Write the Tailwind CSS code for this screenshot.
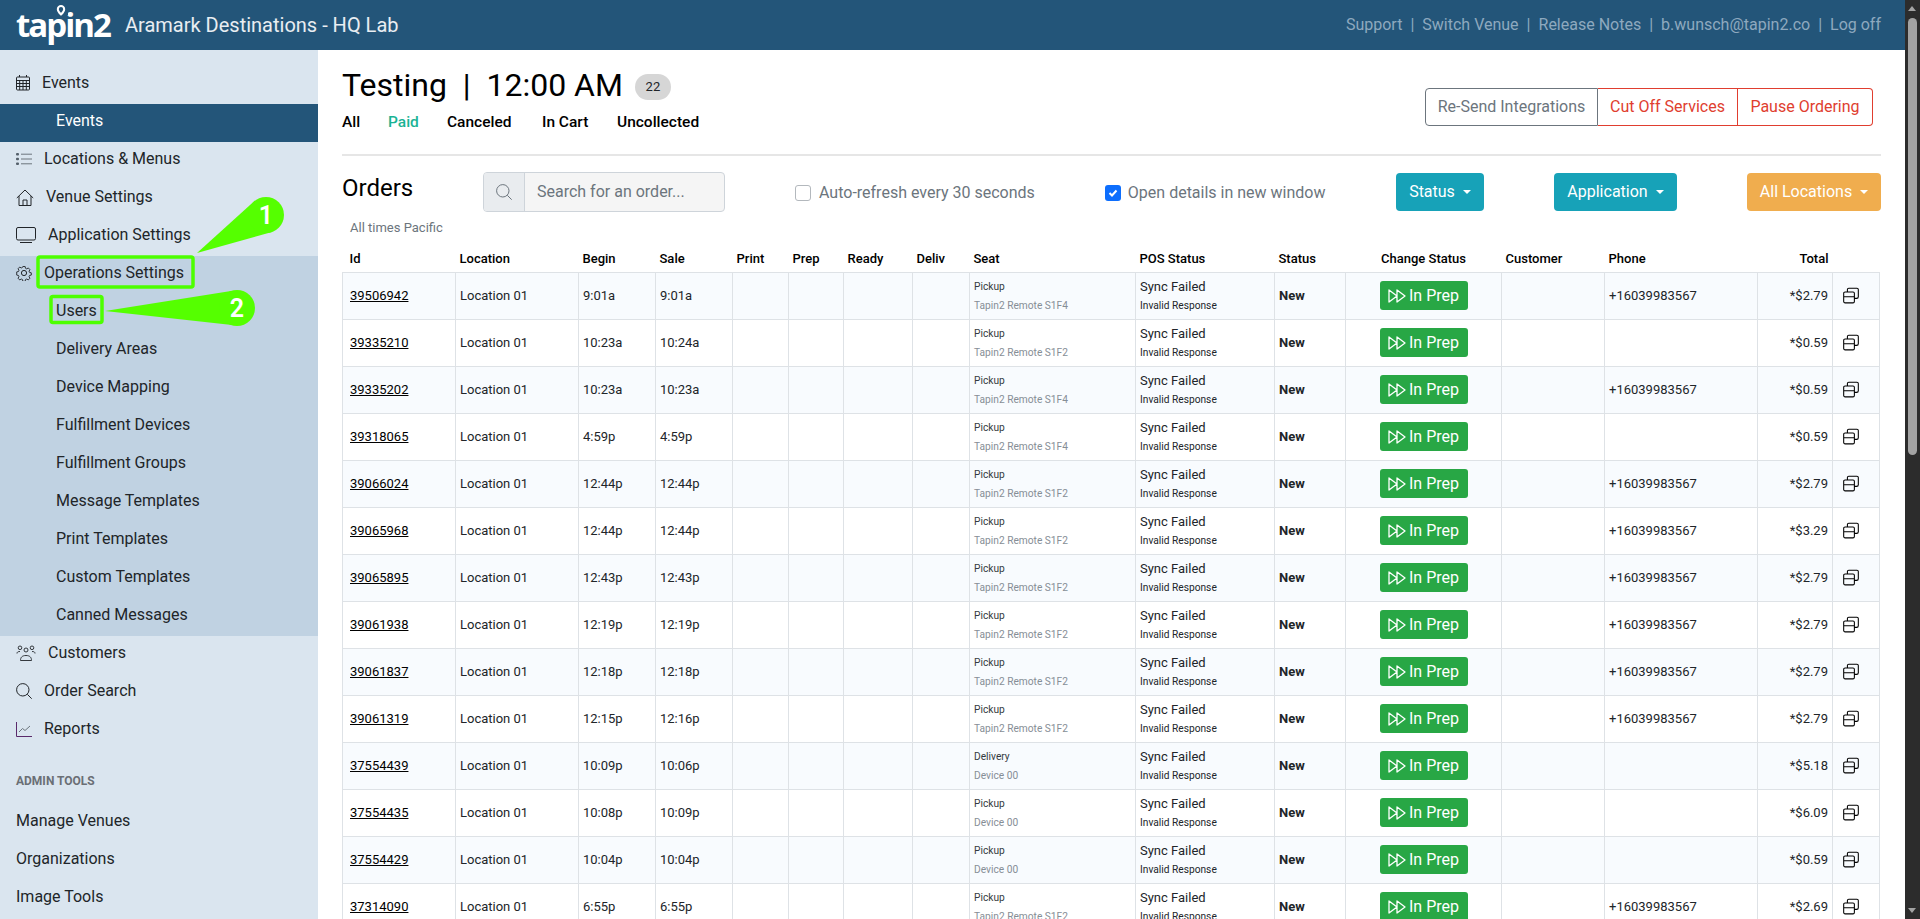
<!DOCTYPE html>
<html lang="en">
  <head>
    <meta charset="UTF-8" />
    <title>Orders - Testing</title>
    <script src="https://cdn.jsdelivr.net/npm/@tailwindcss/browser@4"></script>
  </head>

  <body class="bg-white font-['Roboto',sans-serif] text-[#212529] overflow-hidden">
    <!-- shared icons -->
    <svg class="hidden">
      <symbol id="i-forward" viewBox="0 0 18 18">
        <path fill="none" stroke="currentColor" stroke-width="1.300" stroke-linejoin="round" d="M1 3v12l8-6zM9 3v12l8-6z" />
      </symbol>
      <symbol id="i-copy" viewBox="0 0 16 16">
        <path fill="none" stroke="currentColor" stroke-width=".95" d="M1.500 6.500a1.200 1.200 0 0 1 1.200-1.200h7.100a1.200 1.200 0 0 1 1.200 1.200v7.300a1.200 1.200 0 0 1-1.200 1.200H2.700a1.200 1.200 0 0 1-1.200-1.200zM1.500 9.500h9.500M4.800 5.300V3.200A1.200 1.200 0 0 1 6 2h7.300a1.200 1.200 0 0 1 1.200 1.200v6.300a1.500 1.500 0 0 1-1.500 1.500h-2" />
      </symbol>
    </svg>

    <div class="flex h-[919px] w-[1920px]">
      <div class="w-[1905px] flex flex-col overflow-hidden">
        <!-- top bar -->
        <header class="h-[50px] shrink-0 bg-[#235579] flex items-center pl-4 pr-6">
          <div class="relative w-[94px] mr-[15px]">
            <span class="block font-['Open_Sans',sans-serif] font-bold text-[33px] leading-[50px] tracking-[-2px] text-white">tapin2</span>
            <svg class="absolute left-[38px] top-[4px]" width="14" height="17" viewBox="0 0 14 17">
              <rect width="14" height="11" fill="#235579" />
              <path fill="none" stroke="#fff" stroke-width="2" d="M7 2a3.200 3.200 0 0 1 3.200 3.200C10.200 7.500 7 10.500 7 10.500S3.800 7.500 3.800 5.200A3.200 3.200 0 0 1 7 2z" />
            </svg>
          </div>
          <span class="text-[20px] text-white/90">Aramark Destinations - HQ Lab</span>
          <nav class="ml-auto flex items-center text-[16px] text-[#8ea9bf]">
            <a>Support</a><span class="mx-[8px]">|</span>
            <a>Switch Venue</a><span class="mx-[8px]">|</span>
            <a>Release Notes</a><span class="mx-[8px]">|</span>
            <a>b.wunsch@tapin2.co</a><span class="mx-[8px]">|</span>
            <a>Log off</a>
          </nav>
        </header>

        <div class="flex flex-1 min-h-0">
          <!-- sidebar -->
          <aside class="w-[318px] shrink-0 bg-[#dae5ef] pt-4 text-[16px]">
            <a class="flex items-center h-[38px] pb-1 pl-4">
              <svg class="w-[14px] h-[16px] mr-3" viewBox="0 0 14 16" fill="none" stroke="currentColor"><rect x=".5" y="2" width="13" height="13" rx="1" /><path d="M3.500 0v2M10.500 0v2M.5 5.500h13M.5 8.500h13M.5 11.500h13M3.700 5.500V15M7 5.500V15M10.300 5.500V15" /></svg>
              Events
            </a>
            <a class="flex items-center h-[38px] pb-1 pl-14 bg-[#235579] text-white">Events</a>
            <a class="flex items-center h-[38px] pb-1 pl-4">
              <svg class="w-[16px] h-[14px] mr-3" viewBox="0 0 16 14"><g fill="#55606b"><rect y="1" width="3" height="2.400" rx="1" /><rect y="5.800" width="3" height="2.400" rx="1" /><rect y="10.600" width="3" height="2.400" rx="1" /></g><path stroke="#6c757d" d="M5 2.200h11M5 7h11M5 11.800h11" /></svg>
              Locations &amp; Menus
            </a>
            <a class="flex items-center h-[38px] pb-1 pl-4">
              <svg class="w-[18px] h-[17px] mr-3" viewBox="0 0 18 17" fill="none" stroke="currentColor"><path d="M.8 9 9 1l8.200 8M3 7v9.500h12V7M7 16.500v-5.500h4v5.500" /></svg>
              Venue Settings
            </a>
            <a class="flex items-center h-[38px] pb-1 pl-4">
              <svg class="w-[20px] h-[16px] mr-3" viewBox="0 0 20 16" fill="none" stroke="currentColor"><rect x=".5" y=".5" width="19" height="12.500" rx="1.500" /><path d="M4 15.500h12" /></svg>
              Application Settings
            </a>
            <div class="bg-[#c0d2e2]">
              <a class="flex items-center h-[38px] pb-1 pl-4">
                <svg class="w-[16px] h-[16px] mr-3" viewBox="0 0 16 16" fill="none" stroke="currentColor"><circle cx="8" cy="8" r="2.600" /><path stroke-linejoin="round" d="M6.700.8h2.600l.4 2 1.300.6 1.800-1 1.800 1.900-1 1.700.5 1.300 2 .5v2.500l-2 .5-.5 1.300 1 1.700-1.800 1.900-1.800-1-1.300.6-.4 2H6.700l-.4-2-1.300-.6-1.800 1-1.800-1.900 1-1.700-.5-1.300-2-.5V6.800l2-.5.5-1.300-1-1.700 1.800-1.900 1.800 1 1.300-.6z" transform="translate(.8 .8) scale(.9)" /></svg>
                Operations Settings
              </a>
              <a class="flex items-center h-[38px] pb-1 pl-14">Users</a>
              <a class="flex items-center h-[38px] pb-1 pl-14">Delivery Areas</a>
              <a class="flex items-center h-[38px] pb-1 pl-14">Device Mapping</a>
              <a class="flex items-center h-[38px] pb-1 pl-14">Fulfillment Devices</a>
              <a class="flex items-center h-[38px] pb-1 pl-14">Fulfillment Groups</a>
              <a class="flex items-center h-[38px] pb-1 pl-14">Message Templates</a>
              <a class="flex items-center h-[38px] pb-1 pl-14">Print Templates</a>
              <a class="flex items-center h-[38px] pb-1 pl-14">Custom Templates</a>
              <a class="flex items-center h-[38px] pb-1 pl-14">Canned Messages</a>
            </div>
            <a class="flex items-center h-[38px] pb-1 pl-4">
              <svg class="w-[20px] h-[16px] mr-3" viewBox="0 0 20 16" fill="none" stroke="currentColor" stroke-width=".9"><circle cx="4" cy="2.800" r="1.800" /><circle cx="10" cy="5" r="2" /><circle cx="16" cy="2.800" r="1.800" /><path d="M1 8.500c0-1.500 1-2 3-2M19 8.500c0-1.500-1-2-3-2M4.500 15.500c0-3 1.500-5 5.500-5s5.500 2 5.500 5z" /></svg>
              Customers
            </a>
            <a class="flex items-center h-[38px] pb-1 pl-4">
              <svg class="w-[16px] h-[16px] mr-3" viewBox="0 0 16 16" fill="none" stroke="currentColor"><circle cx="6.800" cy="6.800" r="6.200" /><path d="m11.300 11.300 4.400 4.400" /></svg>
              Order Search
            </a>
            <a class="flex items-center h-[38px] pb-1 pl-4">
              <svg class="w-[16px] h-[15px] mr-3" viewBox="0 0 16 15" fill="none"><path stroke="#5a2a6b" d="M.5 0v14.500H16" /><path stroke="#6c757d" d="m3 10 3.500-3.500 2.500 2 5-4.500" /></svg>
              Reports
            </a>
            <div class="h-[52px] pl-4 pt-[24px] text-[12px] leading-[14px] font-bold text-[#6a6f75]">ADMIN TOOLS</div>
            <a class="flex items-center h-[38px] pl-4">Manage Venues</a>
            <a class="flex items-center h-[38px] pl-4">Organizations</a>
            <a class="flex items-center h-[38px] pl-4">Image Tools</a>
          </aside>

          <!-- main -->
          <main class="flex-1 min-w-0 pl-6 pr-6 pt-4">
            <div class="flex items-start justify-between h-[90px] border-b-2 border-[#e6e6e6]">
              <div>
                <div class="flex items-center h-[38px]">
                  <h1 class="text-[32px] leading-[38px] text-black whitespace-pre">Testing  |  12:00 AM</h1>
                  <span class="ml-[12px] mt-[3px] w-[36px] h-[26px] rounded-full bg-[#d6d6d6] flex items-center justify-center text-[13px]">22</span>
                </div>
                <div class="flex mt-[7px] text-[15.500px] leading-[22px] font-medium text-black">
                  <a class="w-[46px]">All</a>
                  <a class="w-[59px] text-[#1ab394]">Paid</a>
                  <a class="w-[95px]">Canceled</a>
                  <a class="w-[75px]">In Cart</a>
                  <a>Uncollected</a>
                </div>
              </div>
              <div class="flex mt-[22px] mr-[8px] h-[38px] text-[16px]">
                <button class="w-[173px] border border-[#6c757d] rounded-l-[4px] text-[#6c757d]">Re-Send Integrations</button>
                <button class="w-[140px] border border-l-0 border-[#e03e2f] text-[#e03e2f]">Cut Off Services</button>
                <button class="w-[135px] border border-l-0 border-[#e03e2f] rounded-r-[4px] text-[#e03e2f]">Pause Ordering</button>
              </div>
            </div>

            <div class="flex items-start mt-[16px] h-[40px]">
              <h2 class="w-[141px] mt-[1px] text-[24px] leading-[30px] text-black">Orders</h2>
              <div class="flex w-[242px] h-[40px] border border-[#ced4da] rounded-[4px] overflow-hidden bg-[#f5f5f5]">
                <span class="w-[41px] bg-[#e9ecef] border-r border-[#ced4da] flex items-center justify-center text-[#6c757d]">
                  <svg class="w-[16px] h-[16px]" viewBox="0 0 16 16" fill="none" stroke="currentColor"><circle cx="6.800" cy="6.800" r="6.200" /><path d="m11.300 11.300 4.400 4.400" /></svg>
                </span>
                <span class="pl-3 flex items-center text-[16px] text-[#6c757d]">Search for an order...</span>
              </div>
              <label class="ml-[70px] mt-[9px] flex items-center text-[16px] text-[#6c757d]">
                <span class="w-[16px] h-[16px] border border-[#b3b8bd] rounded-[3px] bg-white mr-[8px]"></span>
                Auto-refresh every 30 seconds
              </label>
              <label class="ml-[70px] mt-[9px] flex items-center text-[16px] text-[#6c757d]">
                <span class="w-[16px] h-[16px] rounded-[3px] bg-[#0d6efd] mr-[7px] flex items-center justify-center">
                  <svg class="w-[10px] h-[10px]" viewBox="0 0 10 10" fill="none" stroke="#fff" stroke-width="2"><path d="m1.500 5 2.500 2.500 4.500-5" /></svg>
                </span>
                Open details in new window
              </label>
              <div class="ml-auto flex mt-[1px]">
                <button class="w-[88px] h-[38px] rounded-[4px] bg-[#17a2b8] text-white text-[16px] flex items-center justify-center">Status<span class="ml-[8px] w-0 h-0 border-x-[4px] border-t-[4px] border-x-transparent border-t-white"></span></button>
                <button class="ml-[70px] w-[123px] h-[38px] rounded-[4px] bg-[#17a2b8] text-white text-[16px] flex items-center justify-center">Application<span class="ml-[8px] w-0 h-0 border-x-[4px] border-t-[4px] border-x-transparent border-t-white"></span></button>
                <button class="ml-[70px] w-[134px] h-[38px] rounded-[4px] bg-[#f0ad4e] text-white text-[16px] flex items-center justify-center">All Locations<span class="ml-[8px] w-0 h-0 border-x-[4px] border-t-[4px] border-x-transparent border-t-white"></span></button>
              </div>
            </div>

            <div class="pl-2 mt-[8px] text-[13px] leading-[16px] text-[#6c757d]">All times Pacific</div>

            <table class="mt-[10px] w-[1537px] table-fixed border-collapse text-[13px] [&_th]:h-[26px] [&_th]:px-[4px] [&_th]:font-medium [&_th]:text-left [&_th]:text-black [&_td]:h-[47px] [&_td]:border [&_td]:border-[#dee2e6] [&_td]:px-[4px] [&_td]:leading-[16px]">
              <colgroup>
                <col class="w-[113px]" /><col class="w-[123px]" /><col class="w-[77px]" /><col class="w-[77px]" /><col class="w-[56px]" /><col class="w-[55px]" /><col class="w-[69px]" /><col class="w-[57px]" /><col class="w-[166px]" /><col class="w-[139px]" /><col class="w-[71px]" /><col class="w-[156px]" /><col class="w-[103px]" /><col class="w-[153px]" /><col class="w-[75px]" /><col class="w-[47px]" />
              </colgroup>
              <thead>
                <tr>
                  <th class="!pl-[7px]">Id</th><th>Location</th><th>Begin</th><th>Sale</th><th>Print</th><th>Prep</th><th>Ready</th><th>Deliv</th><th>Seat</th><th>POS Status</th><th>Status</th><th class="text-center!">Change Status</th><th>Customer</th><th>Phone</th><th class="text-right!">Total</th><th></th>
                </tr>
              </thead>
              <tbody>
                <tr class="odd:bg-[#f8fbfe]">
                  <td class="!pl-[7px]"><a class="underline text-black">39506942</a></td><td>Location 01</td><td>9:01a</td><td>9:01a</td><td></td><td></td><td></td><td></td>
                  <td class="text-[10.200px]"><div class="mt-[1px] text-[#343a40]">Pickup</div><div class="mt-[3px] text-[#868e96]">Tapin2 Remote S1F4</div></td>
                  <td><div class="mt-[1px]">Sync Failed</div><div class="mt-[3px] text-[10.200px]">Invalid Response</div></td>
                  <td class="font-bold">New</td>
                  <td><button class="mx-auto flex items-center justify-center w-[88px] h-[29px] rounded-[3px] bg-[#28a745] text-white text-[16px]"><svg class="w-[18px] h-[18px] mr-[3px]"><use href="#i-forward" /></svg>In Prep</button></td>
                  <td></td><td>+16039983567</td><td class="text-right">*$2.79</td><td><svg class="w-[18px] h-[18px] ml-[5px] -mt-[2px] text-black"><use href="#i-copy" /></svg></td>
                </tr>
                <tr class="odd:bg-[#f8fbfe]">
                  <td class="!pl-[7px]"><a class="underline text-black">39335210</a></td><td>Location 01</td><td>10:23a</td><td>10:24a</td><td></td><td></td><td></td><td></td>
                  <td class="text-[10.200px]"><div class="mt-[1px] text-[#343a40]">Pickup</div><div class="mt-[3px] text-[#868e96]">Tapin2 Remote S1F2</div></td>
                  <td><div class="mt-[1px]">Sync Failed</div><div class="mt-[3px] text-[10.200px]">Invalid Response</div></td>
                  <td class="font-bold">New</td>
                  <td><button class="mx-auto flex items-center justify-center w-[88px] h-[29px] rounded-[3px] bg-[#28a745] text-white text-[16px]"><svg class="w-[18px] h-[18px] mr-[3px]"><use href="#i-forward" /></svg>In Prep</button></td>
                  <td></td><td></td><td class="text-right">*$0.59</td><td><svg class="w-[18px] h-[18px] ml-[5px] -mt-[2px] text-black"><use href="#i-copy" /></svg></td>
                </tr>
                <tr class="odd:bg-[#f8fbfe]">
                  <td class="!pl-[7px]"><a class="underline text-black">39335202</a></td><td>Location 01</td><td>10:23a</td><td>10:23a</td><td></td><td></td><td></td><td></td>
                  <td class="text-[10.200px]"><div class="mt-[1px] text-[#343a40]">Pickup</div><div class="mt-[3px] text-[#868e96]">Tapin2 Remote S1F4</div></td>
                  <td><div class="mt-[1px]">Sync Failed</div><div class="mt-[3px] text-[10.200px]">Invalid Response</div></td>
                  <td class="font-bold">New</td>
                  <td><button class="mx-auto flex items-center justify-center w-[88px] h-[29px] rounded-[3px] bg-[#28a745] text-white text-[16px]"><svg class="w-[18px] h-[18px] mr-[3px]"><use href="#i-forward" /></svg>In Prep</button></td>
                  <td></td><td>+16039983567</td><td class="text-right">*$0.59</td><td><svg class="w-[18px] h-[18px] ml-[5px] -mt-[2px] text-black"><use href="#i-copy" /></svg></td>
                </tr>
                <tr class="odd:bg-[#f8fbfe]">
                  <td class="!pl-[7px]"><a class="underline text-black">39318065</a></td><td>Location 01</td><td>4:59p</td><td>4:59p</td><td></td><td></td><td></td><td></td>
                  <td class="text-[10.200px]"><div class="mt-[1px] text-[#343a40]">Pickup</div><div class="mt-[3px] text-[#868e96]">Tapin2 Remote S1F4</div></td>
                  <td><div class="mt-[1px]">Sync Failed</div><div class="mt-[3px] text-[10.200px]">Invalid Response</div></td>
                  <td class="font-bold">New</td>
                  <td><button class="mx-auto flex items-center justify-center w-[88px] h-[29px] rounded-[3px] bg-[#28a745] text-white text-[16px]"><svg class="w-[18px] h-[18px] mr-[3px]"><use href="#i-forward" /></svg>In Prep</button></td>
                  <td></td><td></td><td class="text-right">*$0.59</td><td><svg class="w-[18px] h-[18px] ml-[5px] -mt-[2px] text-black"><use href="#i-copy" /></svg></td>
                </tr>
                <tr class="odd:bg-[#f8fbfe]">
                  <td class="!pl-[7px]"><a class="underline text-black">39066024</a></td><td>Location 01</td><td>12:44p</td><td>12:44p</td><td></td><td></td><td></td><td></td>
                  <td class="text-[10.200px]"><div class="mt-[1px] text-[#343a40]">Pickup</div><div class="mt-[3px] text-[#868e96]">Tapin2 Remote S1F2</div></td>
                  <td><div class="mt-[1px]">Sync Failed</div><div class="mt-[3px] text-[10.200px]">Invalid Response</div></td>
                  <td class="font-bold">New</td>
                  <td><button class="mx-auto flex items-center justify-center w-[88px] h-[29px] rounded-[3px] bg-[#28a745] text-white text-[16px]"><svg class="w-[18px] h-[18px] mr-[3px]"><use href="#i-forward" /></svg>In Prep</button></td>
                  <td></td><td>+16039983567</td><td class="text-right">*$2.79</td><td><svg class="w-[18px] h-[18px] ml-[5px] -mt-[2px] text-black"><use href="#i-copy" /></svg></td>
                </tr>
                <tr class="odd:bg-[#f8fbfe]">
                  <td class="!pl-[7px]"><a class="underline text-black">39065968</a></td><td>Location 01</td><td>12:44p</td><td>12:44p</td><td></td><td></td><td></td><td></td>
                  <td class="text-[10.200px]"><div class="mt-[1px] text-[#343a40]">Pickup</div><div class="mt-[3px] text-[#868e96]">Tapin2 Remote S1F2</div></td>
                  <td><div class="mt-[1px]">Sync Failed</div><div class="mt-[3px] text-[10.200px]">Invalid Response</div></td>
                  <td class="font-bold">New</td>
                  <td><button class="mx-auto flex items-center justify-center w-[88px] h-[29px] rounded-[3px] bg-[#28a745] text-white text-[16px]"><svg class="w-[18px] h-[18px] mr-[3px]"><use href="#i-forward" /></svg>In Prep</button></td>
                  <td></td><td>+16039983567</td><td class="text-right">*$3.29</td><td><svg class="w-[18px] h-[18px] ml-[5px] -mt-[2px] text-black"><use href="#i-copy" /></svg></td>
                </tr>
                <tr class="odd:bg-[#f8fbfe]">
                  <td class="!pl-[7px]"><a class="underline text-black">39065895</a></td><td>Location 01</td><td>12:43p</td><td>12:43p</td><td></td><td></td><td></td><td></td>
                  <td class="text-[10.200px]"><div class="mt-[1px] text-[#343a40]">Pickup</div><div class="mt-[3px] text-[#868e96]">Tapin2 Remote S1F2</div></td>
                  <td><div class="mt-[1px]">Sync Failed</div><div class="mt-[3px] text-[10.200px]">Invalid Response</div></td>
                  <td class="font-bold">New</td>
                  <td><button class="mx-auto flex items-center justify-center w-[88px] h-[29px] rounded-[3px] bg-[#28a745] text-white text-[16px]"><svg class="w-[18px] h-[18px] mr-[3px]"><use href="#i-forward" /></svg>In Prep</button></td>
                  <td></td><td>+16039983567</td><td class="text-right">*$2.79</td><td><svg class="w-[18px] h-[18px] ml-[5px] -mt-[2px] text-black"><use href="#i-copy" /></svg></td>
                </tr>
                <tr class="odd:bg-[#f8fbfe]">
                  <td class="!pl-[7px]"><a class="underline text-black">39061938</a></td><td>Location 01</td><td>12:19p</td><td>12:19p</td><td></td><td></td><td></td><td></td>
                  <td class="text-[10.200px]"><div class="mt-[1px] text-[#343a40]">Pickup</div><div class="mt-[3px] text-[#868e96]">Tapin2 Remote S1F2</div></td>
                  <td><div class="mt-[1px]">Sync Failed</div><div class="mt-[3px] text-[10.200px]">Invalid Response</div></td>
                  <td class="font-bold">New</td>
                  <td><button class="mx-auto flex items-center justify-center w-[88px] h-[29px] rounded-[3px] bg-[#28a745] text-white text-[16px]"><svg class="w-[18px] h-[18px] mr-[3px]"><use href="#i-forward" /></svg>In Prep</button></td>
                  <td></td><td>+16039983567</td><td class="text-right">*$2.79</td><td><svg class="w-[18px] h-[18px] ml-[5px] -mt-[2px] text-black"><use href="#i-copy" /></svg></td>
                </tr>
                <tr class="odd:bg-[#f8fbfe]">
                  <td class="!pl-[7px]"><a class="underline text-black">39061837</a></td><td>Location 01</td><td>12:18p</td><td>12:18p</td><td></td><td></td><td></td><td></td>
                  <td class="text-[10.200px]"><div class="mt-[1px] text-[#343a40]">Pickup</div><div class="mt-[3px] text-[#868e96]">Tapin2 Remote S1F2</div></td>
                  <td><div class="mt-[1px]">Sync Failed</div><div class="mt-[3px] text-[10.200px]">Invalid Response</div></td>
                  <td class="font-bold">New</td>
                  <td><button class="mx-auto flex items-center justify-center w-[88px] h-[29px] rounded-[3px] bg-[#28a745] text-white text-[16px]"><svg class="w-[18px] h-[18px] mr-[3px]"><use href="#i-forward" /></svg>In Prep</button></td>
                  <td></td><td>+16039983567</td><td class="text-right">*$2.79</td><td><svg class="w-[18px] h-[18px] ml-[5px] -mt-[2px] text-black"><use href="#i-copy" /></svg></td>
                </tr>
                <tr class="odd:bg-[#f8fbfe]">
                  <td class="!pl-[7px]"><a class="underline text-black">39061319</a></td><td>Location 01</td><td>12:15p</td><td>12:16p</td><td></td><td></td><td></td><td></td>
                  <td class="text-[10.200px]"><div class="mt-[1px] text-[#343a40]">Pickup</div><div class="mt-[3px] text-[#868e96]">Tapin2 Remote S1F2</div></td>
                  <td><div class="mt-[1px]">Sync Failed</div><div class="mt-[3px] text-[10.200px]">Invalid Response</div></td>
                  <td class="font-bold">New</td>
                  <td><button class="mx-auto flex items-center justify-center w-[88px] h-[29px] rounded-[3px] bg-[#28a745] text-white text-[16px]"><svg class="w-[18px] h-[18px] mr-[3px]"><use href="#i-forward" /></svg>In Prep</button></td>
                  <td></td><td>+16039983567</td><td class="text-right">*$2.79</td><td><svg class="w-[18px] h-[18px] ml-[5px] -mt-[2px] text-black"><use href="#i-copy" /></svg></td>
                </tr>
                <tr class="odd:bg-[#f8fbfe]">
                  <td class="!pl-[7px]"><a class="underline text-black">37554439</a></td><td>Location 01</td><td>10:09p</td><td>10:06p</td><td></td><td></td><td></td><td></td>
                  <td class="text-[10.200px]"><div class="mt-[1px] text-[#343a40]">Delivery</div><div class="mt-[3px] text-[#868e96]">Device 00</div></td>
                  <td><div class="mt-[1px]">Sync Failed</div><div class="mt-[3px] text-[10.200px]">Invalid Response</div></td>
                  <td class="font-bold">New</td>
                  <td><button class="mx-auto flex items-center justify-center w-[88px] h-[29px] rounded-[3px] bg-[#28a745] text-white text-[16px]"><svg class="w-[18px] h-[18px] mr-[3px]"><use href="#i-forward" /></svg>In Prep</button></td>
                  <td></td><td></td><td class="text-right">*$5.18</td><td><svg class="w-[18px] h-[18px] ml-[5px] -mt-[2px] text-black"><use href="#i-copy" /></svg></td>
                </tr>
                <tr class="odd:bg-[#f8fbfe]">
                  <td class="!pl-[7px]"><a class="underline text-black">37554435</a></td><td>Location 01</td><td>10:08p</td><td>10:09p</td><td></td><td></td><td></td><td></td>
                  <td class="text-[10.200px]"><div class="mt-[1px] text-[#343a40]">Pickup</div><div class="mt-[3px] text-[#868e96]">Device 00</div></td>
                  <td><div class="mt-[1px]">Sync Failed</div><div class="mt-[3px] text-[10.200px]">Invalid Response</div></td>
                  <td class="font-bold">New</td>
                  <td><button class="mx-auto flex items-center justify-center w-[88px] h-[29px] rounded-[3px] bg-[#28a745] text-white text-[16px]"><svg class="w-[18px] h-[18px] mr-[3px]"><use href="#i-forward" /></svg>In Prep</button></td>
                  <td></td><td></td><td class="text-right">*$6.09</td><td><svg class="w-[18px] h-[18px] ml-[5px] -mt-[2px] text-black"><use href="#i-copy" /></svg></td>
                </tr>
                <tr class="odd:bg-[#f8fbfe]">
                  <td class="!pl-[7px]"><a class="underline text-black">37554429</a></td><td>Location 01</td><td>10:04p</td><td>10:04p</td><td></td><td></td><td></td><td></td>
                  <td class="text-[10.200px]"><div class="mt-[1px] text-[#343a40]">Pickup</div><div class="mt-[3px] text-[#868e96]">Device 00</div></td>
                  <td><div class="mt-[1px]">Sync Failed</div><div class="mt-[3px] text-[10.200px]">Invalid Response</div></td>
                  <td class="font-bold">New</td>
                  <td><button class="mx-auto flex items-center justify-center w-[88px] h-[29px] rounded-[3px] bg-[#28a745] text-white text-[16px]"><svg class="w-[18px] h-[18px] mr-[3px]"><use href="#i-forward" /></svg>In Prep</button></td>
                  <td></td><td></td><td class="text-right">*$0.59</td><td><svg class="w-[18px] h-[18px] ml-[5px] -mt-[2px] text-black"><use href="#i-copy" /></svg></td>
                </tr>
                <tr class="odd:bg-[#f8fbfe]">
                  <td class="!pl-[7px]"><a class="underline text-black">37314090</a></td><td>Location 01</td><td>6:55p</td><td>6:55p</td><td></td><td></td><td></td><td></td>
                  <td class="text-[10.200px]"><div class="mt-[1px] text-[#343a40]">Pickup</div><div class="mt-[3px] text-[#868e96]">Tapin2 Remote S1F2</div></td>
                  <td><div class="mt-[1px]">Sync Failed</div><div class="mt-[3px] text-[10.200px]">Invalid Response</div></td>
                  <td class="font-bold">New</td>
                  <td><button class="mx-auto flex items-center justify-center w-[88px] h-[29px] rounded-[3px] bg-[#28a745] text-white text-[16px]"><svg class="w-[18px] h-[18px] mr-[3px]"><use href="#i-forward" /></svg>In Prep</button></td>
                  <td></td><td>+16039983567</td><td class="text-right">*$2.69</td><td><svg class="w-[18px] h-[18px] ml-[5px] -mt-[2px] text-black"><use href="#i-copy" /></svg></td>
                </tr>
              </tbody>
            </table>
          </main>
        </div>
      </div>

      <!-- window scrollbar -->
      <div class="relative w-[15px] shrink-0 bg-[#2c2c2c]">
        <span class="absolute left-[3px] top-[6px] w-0 h-0 border-x-[4.500px] border-b-[5px] border-x-transparent border-b-[#a3a3a3]"></span>
        <span class="absolute left-[3px] top-[18px] w-[9px] h-[437px] rounded-full bg-[#a3a3a3]"></span>
        <span class="absolute left-[3px] bottom-[6px] w-0 h-0 border-x-[4.500px] border-t-[5px] border-x-transparent border-t-[#a3a3a3]"></span>
      </div>
    </div>

    <!-- callouts drawn over the sidebar -->
    <svg class="absolute left-0 top-0 pointer-events-none" width="330" height="340" viewBox="0 0 330 340">
      <g fill="none" stroke="#4dff00" stroke-width="3.500">
        <rect x="38" y="257" width="155" height="30" rx="2" />
        <rect x="51" y="296.500" width="51" height="26" rx="2" />
      </g>
      <g fill="#55ff00">
        <path d="M197 253 255 200.500 272 232z" />
        <circle cx="266" cy="215" r="18" />
        <path d="M105 311 231 291 232 325z" />
        <circle cx="237" cy="308" r="18" />
      </g>
      <g fill="#fff" font-family="Roboto, sans-serif" font-weight="600" font-size="25" text-anchor="middle">
        <text x="266" y="224">1</text>
        <text x="237" y="317">2</text>
      </g>
    </svg>
  </body>
</html>
